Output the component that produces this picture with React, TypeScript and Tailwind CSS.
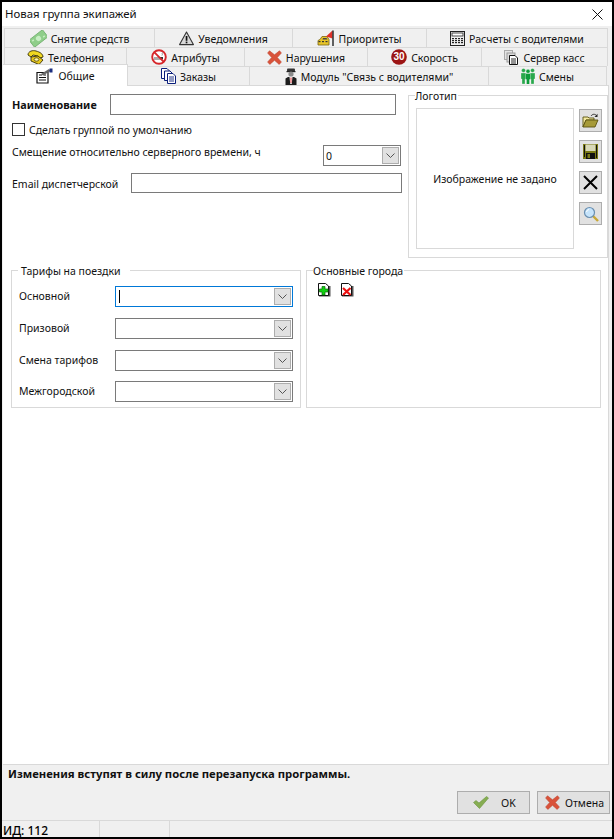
import React from 'react'

const MoneyIcon = () => (
  <svg width="17" height="17" viewBox="0 0 17 17">
    <g transform="rotate(-38 8.5 8.5)">
      <rect x="0" y="4" width="17" height="9" fill="#8fce8a" stroke="#6fae6c" strokeWidth="0.8" />
      <circle cx="8.5" cy="8.5" r="2.6" fill="#c8eec4" />
      <rect x="2" y="6" width="2" height="1.4" fill="#c8eec4" />
      <rect x="13" y="9.6" width="2" height="1.4" fill="#c8eec4" />
    </g>
  </svg>
)

const WarningIcon = () => (
  <svg width="15" height="15" viewBox="0 0 15 15">
    <path d="M7.5 1 L14.4 13.6 H0.6 Z" fill="#d8d8d8" stroke="#333" strokeWidth="1.1" strokeLinejoin="round" />
    <rect x="6.7" y="5" width="1.7" height="4.8" fill="#111" />
    <rect x="6.7" y="10.6" width="1.7" height="1.7" fill="#111" />
  </svg>
)

const TaxiIcon = () => (
  <svg width="17" height="16" viewBox="0 0 17 16">
    <path d="M1 15 V10.5 L3 9.5 L5 6.5 H10 L12 9.5 V15 Z" fill="#e8c52a" stroke="#7a6410" strokeWidth="0.8" />
    <rect x="1.5" y="11" width="2" height="1.2" fill="#333" />
    <rect x="5" y="11" width="2" height="1.2" fill="#333" />
    <rect x="8.5" y="11" width="2" height="1.2" fill="#333" />
    <path d="M6 8 H9.5 L10.5 9.5 H5.5 Z" fill="#444" />
    <path d="M15.5 0.5 L9 6.5 L15.5 8.5 Z" fill="#e0322a" />
    <rect x="15.3" y="0.5" width="1.4" height="15.5" fill="#222" />
  </svg>
)

const CalcIcon = () => (
  <svg width="15" height="15" viewBox="0 0 15 15">
    <rect x="0.5" y="0.5" width="14" height="14" fill="#eee" stroke="#222" />
    <rect x="2" y="2" width="11" height="3" fill="#fff" stroke="#222" strokeWidth="0.8" />
    {[7, 9, 11].map((y) =>
      [2, 5, 8, 11].map((x) => <rect key={`${x}-${y}`} x={x} y={y} width="2" height="1.2" fill="#222" />)
    )}
  </svg>
)

const PhoneIcon = () => (
  <svg width="17" height="15" viewBox="0 0 17 15">
    <path d="M1 5 C1 1 6 0 9 1 C13 2 16 4 16 7 L13 8 L11 6 L6 5 L4 7 Z" fill="#f0d820" stroke="#3a3205" strokeWidth="0.9" />
    <path d="M4 7 L11 6 L16 10 L12 14.5 L4 11 Z" fill="#e8c81c" stroke="#3a3205" strokeWidth="0.9" />
    <ellipse cx="9.5" cy="9.5" rx="2.4" ry="1.7" fill="#fff6a8" stroke="#3a3205" strokeWidth="0.7" />
  </svg>
)

const NoSmokingIcon = () => (
  <svg width="16" height="16" viewBox="0 0 16 16">
    <circle cx="8" cy="8" r="6.8" fill="#fff" stroke="#d6262a" strokeWidth="1.9" />
    <rect x="3" y="8" width="9" height="2.4" fill="#333" />
    <rect x="3" y="8" width="6" height="2.4" fill="#aaa" />
    <path d="M11 6.5 C12 5 10.5 4.5 11.5 3.5" stroke="#888" fill="none" />
    <path d="M3.2 3.2 L12.8 12.8" stroke="#d6262a" strokeWidth="1.9" />
  </svg>
)

const RedXIcon = ({ size = 15 }: { size?: number }) => (
  <svg width={size} height={size} viewBox="0 0 15 15">
    <path
      d="M2.5 0.8 L7.5 4.8 L12.5 0.8 L14.4 3 L10.3 7.5 L14.4 12 L12.2 14.4 L7.5 10.3 L2.8 14.4 L0.6 12 L4.7 7.5 L0.6 3 Z"
      fill="#d9523a"
      stroke="#c04a34"
      strokeWidth="0.6"
      strokeLinejoin="round"
    />
  </svg>
)

const SpeedIcon = () => (
  <svg width="16" height="16" viewBox="0 0 16 16">
    <circle cx="8" cy="8" r="7.8" fill="#9c1414" />
    <text x="8" y="11.4" textAnchor="middle" fontSize="10" fontWeight="700" fill="#fff" fontFamily="Liberation Sans, sans-serif">30</text>
  </svg>
)

const DocsIcon = () => (
  <svg width="15" height="15" viewBox="0 0 15 15">
    <rect x="0.5" y="0.5" width="8" height="9" fill="#e4e4e4" stroke="#aaa" />
    <rect x="3" y="3" width="8" height="9" fill="#ddd" stroke="#999" />
    <path d="M5.5 5.5 H11 L13.5 8 V14.5 H5.5 Z" fill="#fff" stroke="#111" />
    <path d="M7 9 H12 M7 11 H12 M7 13 H12" stroke="#111" strokeWidth="0.9" />
  </svg>
)

const FormIcon = () => (
  <svg width="17" height="16" viewBox="0 0 17 16">
    <path d="M1 4.5 H12 V15 H1 Z" fill="#fff" stroke="#111" strokeWidth="1.2" />
    <path d="M3 7 H6 M7.5 7 H10 M3 9.5 H10 M3 12 H10" stroke="#111" />
    <path d="M5 6 L13 1 L14.5 3 L7 7.5 Z" fill="#666" />
    <rect x="13.5" y="0.5" width="3" height="4" fill="#1c2f80" />
  </svg>
)

const BlueDocsIcon = () => (
  <svg width="15" height="16" viewBox="0 0 15 16">
    <path d="M0.5 0.5 H6 L8 2.5 V10.5 H0.5 Z" fill="#fff" stroke="#0b1f7c" />
    <path d="M3.5 3 H9 L11 5 V12.5 H3.5 Z" fill="#fff" stroke="#0b1f7c" />
    <path d="M6.5 5.5 H12 L14.5 8 V15.5 H6.5 Z" fill="#fff" stroke="#0b1f7c" />
    <path d="M8 9 H13 M8 11 H13 M8 13 H13" stroke="#0b1f7c" strokeWidth="0.9" />
  </svg>
)

const DriverIcon = () => (
  <svg width="12" height="17" viewBox="0 0 12 17">
    <rect x="2" y="0.5" width="8" height="3" rx="1" fill="#333" />
    <rect x="1.5" y="3" width="9" height="1.2" fill="#222" />
    <circle cx="6" cy="6" r="2.6" fill="#8a8a8a" />
    <path d="M0.5 17 V10.5 L3 9 H9 L11.5 10.5 V17 Z" fill="#1d1d1d" />
    <path d="M4.5 9 H7.5 L6.7 16 H5.3 Z" fill="#fff" />
    <path d="M5.5 9.5 H6.5 L6.4 15 H5.6 Z" fill="#d8262a" />
  </svg>
)

const PeopleIcon = () => (
  <svg width="14" height="16" viewBox="0 0 14 16">
    {[2.5, 11.5, 7].map((x) => (
      <g key={x} fill={x === 7 ? '#0e9c3a' : '#2aa84c'} stroke="#fff" strokeWidth="0.3">
        <circle cx={x} cy={x === 7 ? 3.2 : 2.4} r="2" />
        <path d={`M${x - 2.5} ${x === 7 ? 5.5 : 5} h5 v6 h-1 v5 h-3 v-5 h-1 Z`} />
      </g>
    ))}
  </svg>
)

const Chevron = () => (
  <svg width="9" height="5" viewBox="0 0 9 5" fill="none">
    <path d="M0.5 0.5 L4.5 4.5 L8.5 0.5" stroke="#555" />
  </svg>
)

const CheckIcon = () => (
  <svg width="16" height="13" viewBox="0 0 16 13">
    <path d="M0.5 6.5 L3 4.5 L6 7 L13.5 0.5 L15.5 2 L6.5 12.5 Z" fill="#86ad52" stroke="#6b9440" strokeWidth="0.6" strokeLinejoin="round" />
  </svg>
)

const FolderIcon = () => (
  <svg width="17" height="15" viewBox="0 0 17 15">
    <path d="M1 14 V4 H6 L7 5 H12 V7 H4 Z" fill="#f3e9a0" stroke="#5a5210" strokeWidth="0.9" />
    <path d="M1 14 L4 7 H16 L13 14 Z" fill="#a69a38" stroke="#5a5210" strokeWidth="0.9" />
    <path d="M9 3 C10.5 0.8 13 0.8 14.5 2.5" stroke="#333" fill="none" />
    <path d="M15.5 0.8 V4 H12.5 Z" fill="#222" />
  </svg>
)

const FloppyIcon = () => (
  <svg width="15" height="15" viewBox="0 0 15 15">
    <path d="M0 0 H15 V15 H0 Z" fill="#7a7a14" />
    <rect x="2.5" y="0.5" width="10" height="6.5" fill="#d8d8b8" />
    <rect x="1" y="1" width="1" height="12" fill="#111" />
    <rect x="3" y="9" width="9" height="6" fill="#111" />
    <rect x="4.5" y="10" width="2.5" height="4" fill="#7a7a14" />
    <rect x="13" y="1" width="1" height="13" fill="#111" />
  </svg>
)

const CrossIcon = () => (
  <svg width="15" height="15" viewBox="0 0 15 15">
    <path d="M1 1 L14 14 M14 1 L1 14" stroke="#000" strokeWidth="2" />
  </svg>
)

const SearchIcon = () => (
  <svg width="16" height="16" viewBox="0 0 16 16">
    <path d="M10 10 L15 15" stroke="#c8a838" strokeWidth="2.4" />
    <circle cx="6.5" cy="6.5" r="5" fill="#c6e4fb" stroke="#6a8fb0" strokeWidth="1.2" />
    <path d="M3.5 6 A3 3 0 0 1 6 3.5" stroke="#fff" fill="none" />
  </svg>
)

const CityAddIcon = () => (
  <svg width="13" height="14" viewBox="0 0 13 14">
    <path d="M1 13.5 H12.5 V3 H1" fill="#555" />
    <path d="M0.5 0.5 H7.5 L10.5 3 V12.5 H0.5 Z" fill="#fff" stroke="#111" />
    <path d="M4 3.5 H7 V6 H10 V9 H7 V12 H4 V9 H1.5 V6 H4 Z" fill="#12d012" stroke="#0a6a0a" strokeWidth="0.7" />
  </svg>
)

const CityRemoveIcon = () => (
  <svg width="13" height="14" viewBox="0 0 13 14">
    <path d="M1 13.5 H12.5 V3 H1" fill="#555" />
    <path d="M0.5 0.5 H7.5 L10.5 3 V12.5 H0.5 Z" fill="#fff" stroke="#111" />
    <path d="M2 5 L9.5 12 M9.5 5 L2 12" stroke="#ee1111" strokeWidth="2.2" />
  </svg>
)

const tabRows = [
  [
    { w: 'w-[150px]', icon: <MoneyIcon />, label: 'Снятие средств' },
    { w: 'w-[138px]', icon: <WarningIcon />, label: 'Уведомления' },
    { w: 'w-[134px]', icon: <TaxiIcon />, label: 'Приоритеты' },
    { w: 'w-[181px]', icon: <CalcIcon />, label: 'Расчеты с водителями' },
  ],
  [
    { w: 'w-[122px]', icon: <PhoneIcon />, label: 'Телефония' },
    { w: 'w-[118px]', icon: <NoSmokingIcon />, label: 'Атрибуты' },
    { w: 'w-[123px]', icon: <RedXIcon />, label: 'Нарушения' },
    { w: 'w-[114px]', icon: <SpeedIcon />, label: 'Скорость' },
    { w: 'w-[126px]', icon: <DocsIcon />, label: 'Сервер касс' },
  ],
]

const bottomTabs = [
  { w: 'w-[122px]', icon: <BlueDocsIcon />, label: 'Заказы' },
  { w: 'w-[239px]', icon: <DriverIcon />, label: 'Модуль "Связь с водителями"' },
  { w: 'w-[118px]', icon: <PeopleIcon />, label: 'Смены' },
]

const Tab = ({ w, icon, label }: { w: string; icon: React.ReactNode; label: string }) => (
  <div className={`${w} h-full flex items-center justify-center gap-[4px] border-t border-r border-[#d9d9d9] bg-[#f0f0f0]`}>
    {icon}
    <span className="mt-[2px]">{label}</span>
  </div>
)

const Select = ({ w, focused, value }: { w: string; focused?: boolean; value?: string }) => (
  <div className={`${w} h-[21px] flex items-center justify-between border pl-[2px] pr-px bg-white ${focused ? 'border-[#0078d7]' : 'border-[#7a7a7a]'}`}>
    {focused ? <div className="w-px h-[13px] bg-black ml-px" /> : <span>{value}</span>}
    <div className="w-[17px] h-[17px] flex items-center justify-center bg-[#e1e1e1] border border-[#adadad]">
      <Chevron />
    </div>
  </div>
)

const ToolButton = ({ children }: { children: React.ReactNode }) => (
  <div className="w-[23px] h-[23px] flex items-center justify-center bg-[#e1e1e1] border border-[#adadad]">
    {children}
  </div>
)

const tariffs = ['Основной', 'Призовой', 'Смена тарифов', 'Межгородской']

export default function App() {
  return (
    <div className="w-[614px] h-[839px] flex flex-col border-2 border-black bg-[#f0f0f0] text-[10.5px] leading-[14px] text-[#111] font-['Noto_Sans','Liberation_Sans',sans-serif] overflow-hidden">
      {/* title bar */}
      <div className="h-[24px] shrink-0 flex items-center justify-between bg-white pl-[3px] pr-[9px] text-[11.4px]">
        <span>Новая группа экипажей</span>
        <svg width="11" height="11" viewBox="0 0 11 11">
          <path d="M0.5 0.5 L10.5 10.5 M10.5 0.5 L0.5 10.5" stroke="#111" strokeWidth="1" />
        </svg>
      </div>

      {/* tabs */}
      <div className="h-[59px] shrink-0 flex flex-col pt-[2px] pl-[2px]">
        {tabRows.map((row, i) => (
          <div key={i} className="h-[19px] flex border-l border-[#d9d9d9] w-fit">
            {row.map((t) => (
              <Tab key={t.label} {...t} />
            ))}
          </div>
        ))}
        <div className="h-[19px] flex w-fit -ml-px">
          <div className="relative w-[125px] h-[22px] -mt-[2px] flex items-center justify-center gap-[6px] bg-white border-t border-r border-[#d9d9d9] z-10">
            <FormIcon />
            <span>Общие</span>
          </div>
          {bottomTabs.map((t) => (
            <Tab key={t.label} {...t} />
          ))}
        </div>
      </div>

      {/* page */}
      <div className="h-[680px] shrink-0 w-[606px] ml-px bg-white border-t border-b border-r border-[#d9d9d9]">
        <div className="flex h-[172px]">
          <div className="w-[405px] shrink-0 pl-[9px] pt-[8px]">
            <div className="flex items-center h-[21px]">
              <span className="w-[98px] font-bold text-[10.8px]">Наименование</span>
              <div className="w-[286px] h-[21px] border border-[#7a7a7a]" />
            </div>
            <div className="flex items-center mt-[8px] h-[13px]">
              <div className="w-[13px] h-[13px] border border-[#333]" />
              <span className="ml-[4px]">Сделать группой по умолчанию</span>
            </div>
            <div className="flex mt-[9px] h-[21px]">
              <span className="w-[311px]">Смещение относительно серверного времени, ч</span>
              <Select w="w-[78px]" value="0" />
            </div>
            <div className="flex items-center mt-[7px] h-[20px]">
              <span className="w-[119px] mt-[2px]">Email диспетчерской</span>
              <div className="w-[271px] h-[20px] border border-[#7a7a7a]" />
            </div>
          </div>

          <fieldset className="w-[200px] h-[170px] mt-[2px] border border-[#d9d9d9] pl-[7px] pr-[5px] flex-none">
            <legend className="h-[14px] leading-[16px] ml-[-1px] pr-px">Логотип</legend>
            <div className="flex justify-between mt-[6px]">
              <div className="w-[158px] h-[141px] border border-[#d9d9d9] flex items-center justify-center">
                <span>Изображение не задано</span>
              </div>
              <div className="flex flex-col gap-[8px] mt-px">
                <ToolButton><FolderIcon /></ToolButton>
                <ToolButton><FloppyIcon /></ToolButton>
                <ToolButton><CrossIcon /></ToolButton>
                <ToolButton><SearchIcon /></ToolButton>
              </div>
            </div>
          </fieldset>
        </div>

        <div className="flex mt-[5px] ml-[8px] gap-[5px]">
          <fieldset className="w-[290px] h-[145px] border border-[#d9d9d9] pl-[7px] pr-[7px]">
            <legend className="h-[14px] leading-[16px] -ml-px pl-[3px] pr-[9px]">Тарифы на поездки</legend>
            <div className="flex flex-col gap-[11px] mt-[9px]">
              {tariffs.map((t, i) => (
                <div key={t} className="flex items-center h-[21px] last:-mt-px">
                  <span className="w-[96px] -mt-[2px]">{t}</span>
                  <Select w="w-[178px]" focused={i === 0} />
                </div>
              ))}
            </div>
          </fieldset>
          <fieldset className="w-[295px] h-[145px] border border-[#d9d9d9] pl-[11px]">
            <legend className="h-[14px] leading-[16px] -ml-[5px] pr-px">Основные города</legend>
            <div className="flex gap-[10px] mt-[6px]">
              <CityAddIcon />
              <CityRemoveIcon />
            </div>
          </fieldset>
        </div>
      </div>

      {/* footer */}
      <div className="h-[55px] shrink-0 flex flex-col">
        <div className="pl-[6px] pt-[2px] font-bold text-[11.3px]">Изменения вступят в силу после перезапуска программы.</div>
        <div className="flex justify-end gap-[7px] pr-[2px] mt-[10px]">
          <div className="w-[73px] h-[23px] flex items-center pl-[15px] gap-[12px] bg-[#e1e1e1] border border-[#adadad]">
            <CheckIcon />
            <span>OK</span>
          </div>
          <div className="w-[73px] h-[23px] flex items-center pl-[7px] gap-[5px] bg-[#e1e1e1] border border-[#adadad]">
            <RedXIcon />
            <span>Отмена</span>
          </div>
        </div>
      </div>

      {/* status bar */}
      <div className="flex-1 flex border-t border-[#d9d9d9]">
        <div className="w-[98px] pl-px pt-[3px] border-r border-[#d9d9d9] text-black text-[12px] font-medium">ИД: 112</div>
        <div className="w-[70px] border-r border-[#d9d9d9]" />
      </div>
    </div>
  )
}
